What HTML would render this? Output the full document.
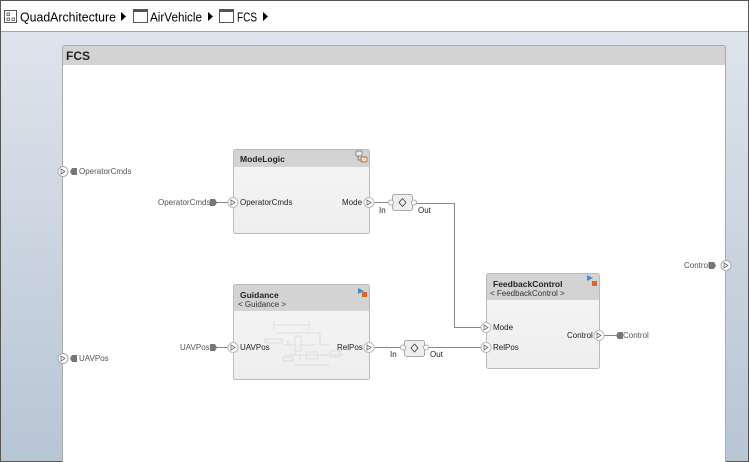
<!DOCTYPE html>
<html><head><style>
html,body{margin:0;padding:0;width:749px;height:462px;overflow:hidden;font-family:"Liberation Sans",sans-serif}
</style></head><body>
<svg width="749" height="462" xmlns="http://www.w3.org/2000/svg" font-family="Liberation Sans, sans-serif">
<defs>
<linearGradient id="bg" x1="0" y1="0" x2="0" y2="1"><stop offset="0" stop-color="#e0e6ee"/><stop offset="1" stop-color="#b8c5d4"/></linearGradient>
<linearGradient id="bd" x1="0" y1="0" x2="0" y2="1"><stop offset="0" stop-color="#f6f6f6"/><stop offset="1" stop-color="#eeeeee"/></linearGradient>
</defs>
<rect x="0" y="0" width="749" height="462" fill="url(#bg)"/>
<rect x="0" y="0" width="749" height="31" fill="#fff"/>
<line x1="0" y1="31.5" x2="749" y2="31.5" stroke="#9aa2ad"/>
<rect x="0.5" y="0.5" width="748" height="461" fill="none" stroke="#555"/>
<!-- breadcrumb -->
<rect x="4.5" y="10.5" width="12" height="12" fill="#fff" stroke="#555"/>
<rect x="7" y="13" width="2.5" height="2.5" fill="none" stroke="#555" stroke-width=".8"/><rect x="7" y="18" width="2.5" height="2.5" fill="none" stroke="#555" stroke-width=".8"/><rect x="12" y="18" width="2.5" height="2.5" fill="none" stroke="#555" stroke-width=".8"/>
<text x="20" y="21.5" font-size="13" fill="#000" textLength="96" lengthAdjust="spacingAndGlyphs">QuadArchitecture</text>
<path d="M121 12 L126 16.5 L121 21Z" fill="#000"/>
<rect x="133.5" y="9.5" width="14" height="13" fill="#fff" stroke="#555"/><rect x="133.5" y="9.5" width="14" height="2.5" fill="#555"/>
<text x="150" y="21.5" font-size="13" fill="#000" textLength="52" lengthAdjust="spacingAndGlyphs">AirVehicle</text>
<path d="M208 12 L213 16.5 L208 21Z" fill="#000"/>
<rect x="219.5" y="9.5" width="14" height="13" fill="#fff" stroke="#555"/><rect x="219.5" y="9.5" width="14" height="2.5" fill="#555"/>
<text x="237" y="21.5" font-size="13" fill="#000" textLength="20" lengthAdjust="spacingAndGlyphs">FCS</text>
<path d="M263 12 L268 16.5 L263 21Z" fill="#000"/>
<!-- FCS frame -->
<rect x="62.5" y="45.5" width="663" height="420" fill="#fff" stroke="#aaa" rx="2"/>
<rect x="63" y="46" width="662" height="19" fill="#d3d3d3"/>
<text x="66" y="60" font-size="12" font-weight="bold" fill="#222">FCS</text>
<!-- wires -->
<g stroke="#888" fill="none" stroke-width="1">
<line x1="216" y1="202.5" x2="228" y2="202.5"/>
<line x1="216" y1="347.5" x2="228" y2="347.5"/>
<line x1="374" y1="202.5" x2="390" y2="202.5"/>
<path d="M414 203.5 H454.5 V327.5 H481"/>
<line x1="374" y1="347.5" x2="401" y2="347.5"/>
<line x1="426" y1="347.5" x2="481" y2="347.5"/>
<line x1="604" y1="335.5" x2="616" y2="335.5"/>
</g>
<!-- boundary ports -->
<g font-size="8" fill="#555">
<circle cx="63" cy="171.5" r="5" fill="#fff" stroke="#aaa"/><path d="M61 169 L65 171.5 L61 174Z" fill="none" stroke="#666" stroke-width=".8"/>
<path d="M72 168 h5 v7 h-5 l-2 -3.5z" fill="#777"/><text x="79" y="174">OperatorCmds</text>
<circle cx="63" cy="358.5" r="5" fill="#fff" stroke="#aaa"/><path d="M61 356 L65 358.5 L61 361Z" fill="none" stroke="#666" stroke-width=".8"/>
<path d="M72 355 h5 v7 h-5 l-2 -3.5z" fill="#777"/><text x="79" y="361">UAVPos</text>
<circle cx="726" cy="265.5" r="5" fill="#fff" stroke="#aaa"/><path d="M724 263 L728 265.5 L724 268Z" fill="none" stroke="#666" stroke-width=".8"/>
<path d="M709 262 h5 l2 3.5 l-2 3.5 h-5z" fill="#777"/><text x="684" y="268">Control</text>
<text x="158" y="205">OperatorCmds</text><path d="M210 199 h5 l2 3.5 l-2 3.5 h-5z" fill="#777"/>
<text x="180" y="350">UAVPos</text><path d="M210 344 h5 l2 3.5 l-2 3.5 h-5z" fill="#777"/>
<path d="M616 335.5 l2 -3.5 h5 v7 h-5z" fill="#777"/><text x="623" y="338">Control</text>
</g>
<!-- ModeLogic -->
<rect x="233.5" y="149.5" width="136" height="84" rx="2" fill="url(#bd)" stroke="#bbb"/>
<rect x="234" y="150" width="135" height="17" fill="#d3d3d3"/>
<text x="240" y="162" font-size="8.5" font-weight="bold" fill="#222">ModeLogic</text>
<rect x="356" y="151" width="6" height="5" rx="1" fill="#eee" stroke="#667" stroke-width=".7"/><rect x="361" y="157" width="6" height="5" rx="1" fill="#fd8" stroke="#667" stroke-width=".7"/><path d="M358 156 v4 h3" fill="none" stroke="#667" stroke-width=".7"/>
<g font-size="8" fill="#222">
<text x="240" y="205">OperatorCmds</text><text x="342" y="205">Mode</text>
</g>
<!-- Guidance -->
<rect x="233.5" y="284.5" width="136" height="95" rx="2" fill="url(#bd)" stroke="#bbb"/>
<rect x="234" y="285" width="135" height="26" fill="#d3d3d3"/>
<text x="240" y="298" font-size="8.5" font-weight="bold" fill="#222">Guidance</text>
<text x="238" y="307" font-size="8" fill="#333">&lt; Guidance &gt;</text>
<path d="M358 288 L364 291 L358 294Z" fill="#3a8fd9"/><rect x="362" y="292" width="5" height="5" fill="#e0642a"/>
<g stroke="#ddd" fill="none" stroke-width="1">
<path d="M273 325 H310 M274 321 V330 M309 321 V330 M276 333 H320 V345 H330 M288 340 V345 M300 345 H315 M283 345 H295 V355 H292 M285 355 H345 M300 355 V360 M320 355 H345 M295 365 H330"/>
<rect x="265" y="339" width="17" height="4"/><rect x="295" y="336" width="6" height="15"/><rect x="306" y="352" width="12" height="7"/><rect x="330" y="351" width="10" height="6"/><rect x="283" y="357" width="10" height="4"/>
</g>
<g font-size="8" fill="#222"><text x="240" y="350">UAVPos</text><text x="337" y="350">RelPos</text></g>
<!-- FeedbackControl -->
<rect x="486.5" y="273.5" width="113" height="95" rx="2" fill="url(#bd)" stroke="#bbb"/>
<rect x="487" y="274" width="112" height="26" fill="#d3d3d3"/>
<text x="493" y="287" font-size="8.5" font-weight="bold" fill="#222">FeedbackControl</text>
<text x="490" y="296" font-size="8" fill="#333">&lt; FeedbackControl &gt;</text>
<path d="M587 275 L593 278 L587 281Z" fill="#3a8fd9"/><rect x="592" y="281" width="5" height="5" fill="#e0642a"/>
<g font-size="8" fill="#222"><text x="493" y="330">Mode</text><text x="493" y="350">RelPos</text><text x="567" y="338">Control</text></g>
<!-- block ports -->
<g fill="#fff" stroke="#bbb">
<circle cx="233" cy="202.5" r="5"/><circle cx="369" cy="202.5" r="5"/>
<circle cx="233" cy="347.5" r="5"/><circle cx="369" cy="347.5" r="5"/>
<circle cx="486" cy="327.5" r="5"/><circle cx="486" cy="347.5" r="5"/><circle cx="599" cy="335.5" r="5"/>
</g>
<g fill="none" stroke="#666" stroke-width=".8">
<path d="M231 200 L235 202.5 L231 205Z"/><path d="M367 200 L371 202.5 L367 205Z"/>
<path d="M231 345 L235 347.5 L231 350Z"/><path d="M367 345 L371 347.5 L367 350Z"/>
<path d="M484 325 L488 327.5 L484 330Z"/><path d="M484 345 L488 347.5 L484 350Z"/><path d="M597 333 L601 335.5 L597 338Z"/>
</g>
<!-- converters -->
<g>
<rect x="392.5" y="194.5" width="20" height="16" rx="2" fill="#eee" stroke="#aaa"/>
<circle cx="391" cy="202.5" r="2.5" fill="#fff" stroke="#aaa"/><circle cx="414" cy="202.5" r="2.5" fill="#fff" stroke="#aaa"/>
<path d="M402.5 198.5 L406 202.5 L402.5 206.5 L399 202.5Z" fill="none" stroke="#444" stroke-width=".9"/>
<text x="379" y="213" font-size="8" fill="#222">In</text><text x="418" y="213" font-size="8" fill="#222">Out</text>
<rect x="404.5" y="340.5" width="20" height="16" rx="2" fill="#eee" stroke="#aaa"/>
<circle cx="403" cy="347.5" r="2.5" fill="#fff" stroke="#aaa"/><circle cx="426" cy="347.5" r="2.5" fill="#fff" stroke="#aaa"/>
<path d="M414.5 344 L418 348 L414.5 352 L411 348Z" fill="none" stroke="#444" stroke-width=".9"/>
<text x="390" y="357" font-size="8" fill="#222">In</text><text x="430" y="357" font-size="8" fill="#222">Out</text>
</g>
</svg>
</body></html>
